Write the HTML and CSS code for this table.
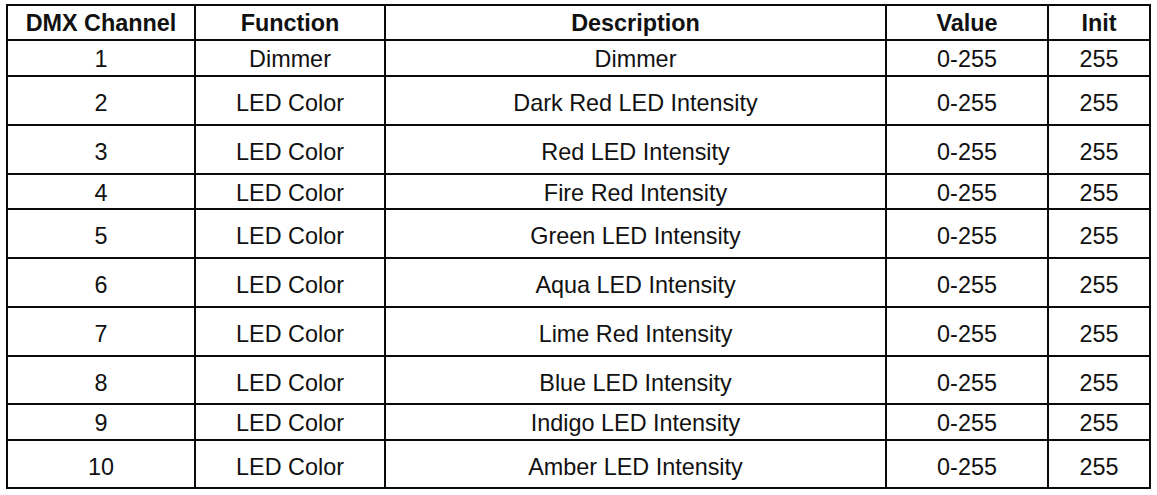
FILE: index.html
```html
<!DOCTYPE html>
<html>
<head>
<meta charset="utf-8">
<link rel="stylesheet" href="styles.css">
</head>
<body>
<table class="dmx">
  <colgroup>
    <col class="c1"><col class="c2"><col class="c3"><col class="c4"><col class="c5">
  </colgroup>
  <thead>
    <tr class="h35"><th>DMX Channel</th><th>Function</th><th>Description</th><th>Value</th><th>Init</th></tr>
  </thead>
  <tbody>
    <tr class="h36"><td>1</td><td>Dimmer</td><td>Dimmer</td><td>0-255</td><td>255</td></tr>
    <tr class="h49 tall"><td>2</td><td>LED Color</td><td>Dark Red LED Intensity</td><td>0-255</td><td>255</td></tr>
    <tr class="h49 tall"><td>3</td><td>LED Color</td><td>Red LED Intensity</td><td>0-255</td><td>255</td></tr>
    <tr class="h35"><td>4</td><td>LED Color</td><td>Fire Red Intensity</td><td>0-255</td><td>255</td></tr>
    <tr class="h49 tall"><td>5</td><td>LED Color</td><td>Green LED Intensity</td><td>0-255</td><td>255</td></tr>
    <tr class="h49 tall"><td>6</td><td>LED Color</td><td>Aqua LED Intensity</td><td>0-255</td><td>255</td></tr>
    <tr class="h49 tall"><td>7</td><td>LED Color</td><td>Lime Red Intensity</td><td>0-255</td><td>255</td></tr>
    <tr class="h48 tall"><td>8</td><td>LED Color</td><td>Blue LED Intensity</td><td>0-255</td><td>255</td></tr>
    <tr class="h36"><td>9</td><td>LED Color</td><td>Indigo LED Intensity</td><td>0-255</td><td>255</td></tr>
    <tr class="h48 tall"><td>10</td><td>LED Color</td><td>Amber LED Intensity</td><td>0-255</td><td>255</td></tr>
  </tbody>
</table>
</body>
</html>
```
FILE: styles.css
```css
html, body {
  margin: 0;
  padding: 0;
  background: #fff;
}
body {
  padding: 4px 0 0 6px;
  font-family: "Liberation Sans", Arial, sans-serif;
  color: #111;
}
.dmx {
  border-collapse: collapse;
  table-layout: fixed;
  width: 1143px;
}
.c1 { width: 188px; }
.c2 { width: 190px; }
.c3 { width: 501px; }
.c4 { width: 162px; }
.c5 { width: 102px; }
.dmx th, .dmx td {
  border: 2px solid #0a0a0a;
  text-align: center;
  vertical-align: middle;
  padding: 2px 0 0 0;
  font-size: 23.4px;
  line-height: 26px;
}
.dmx th {
  font-weight: bold;
  padding-top: 1px;
}
.h35 { height: 35px; }
.h36 { height: 36px; }
.h48 { height: 48px; }
.h49 { height: 49px; }
.tall td { padding-top: 5px; }
```
